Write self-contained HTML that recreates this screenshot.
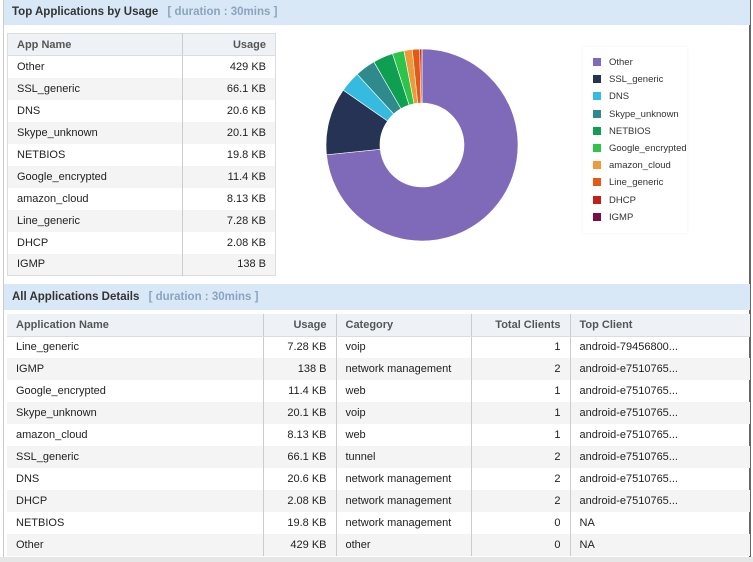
<!DOCTYPE html>
<html><head><meta charset="utf-8"><style>
*{margin:0;padding:0;box-sizing:border-box}
body{width:753px;height:562px;background:#fff;font-family:"Liberation Sans",Arial,sans-serif;font-size:11px;color:#222;position:relative;overflow:hidden}
.frame{position:absolute;left:3px;top:0;width:748px;height:558px;border-left:1px solid #ccc;border-right:2px solid #666;background:#fff}
.hdr{position:absolute;left:4px;width:746px;background:#d9e8f6;font-weight:bold;color:#333;font-size:11.5px;padding-left:8px}
.hdr span{color:#8aa4bf;font-weight:bold;margin-left:6px}
table{position:absolute;border-collapse:collapse}
td,th{height:22px;padding:0 9px;white-space:nowrap;font-weight:normal}
th{background:#eef2f6;color:#555;font-weight:bold;text-align:left;border-bottom:1px solid #d8dde3}
tr:nth-child(odd) td{background:#f4f4f4}
.r{text-align:right}
.bl{border-left:1px solid #ccc}
.leg{position:absolute;left:583px;top:47px;width:104px;height:186px;background:#fff;box-shadow:0 0 3px #eee}
.leg div{position:absolute;left:10px;font-size:9.5px;color:#333}
.leg i{display:inline-block;width:8px;height:8px;margin-right:8px;vertical-align:-1px}
</style></head><body>
<div class="frame"></div>
<div class="hdr" style="top:0;height:25px;line-height:24px">Top Applications by Usage <span>[ duration : 30mins ]</span></div>
<table style="left:7px;top:33px;width:269px;border:1px solid #ddd">
<tr><th style="height:22px">App Name</th><th class="r bl">Usage</th></tr>
<tr><td>Other</td><td class="r bl">429 KB</td></tr>
<tr><td>SSL_generic</td><td class="r bl">66.1 KB</td></tr>
<tr><td>DNS</td><td class="r bl">20.6 KB</td></tr>
<tr><td>Skype_unknown</td><td class="r bl">20.1 KB</td></tr>
<tr><td>NETBIOS</td><td class="r bl">19.8 KB</td></tr>
<tr><td>Google_encrypted</td><td class="r bl">11.4 KB</td></tr>
<tr><td>amazon_cloud</td><td class="r bl">8.13 KB</td></tr>
<tr><td>Line_generic</td><td class="r bl">7.28 KB</td></tr>
<tr><td>DHCP</td><td class="r bl">2.08 KB</td></tr>
<tr><td>IGMP</td><td class="r bl">138 B</td></tr>
</table>
<svg id="pie" style="position:absolute;left:0;top:0" width="753" height="290"></svg>
<div class="leg" id="leg"></div>
<div class="hdr" style="top:284px;height:26px;line-height:26px">All Applications Details <span>[ duration : 30mins ]</span></div>
<table style="left:7px;top:314px;width:743px">
<tr><th style="width:256px">Application Name</th><th class="r bl" style="width:73px">Usage</th><th class="bl" style="width:135px">Category</th><th class="r bl" style="width:99px">Total Clients</th><th class="bl">Top Client</th></tr>
<tr><td>Line_generic</td><td class="r bl">7.28 KB</td><td class="bl">voip</td><td class="r bl">1</td><td class="bl">android-79456800...</td></tr>
<tr><td>IGMP</td><td class="r bl">138 B</td><td class="bl">network management</td><td class="r bl">2</td><td class="bl">android-e7510765...</td></tr>
<tr><td>Google_encrypted</td><td class="r bl">11.4 KB</td><td class="bl">web</td><td class="r bl">1</td><td class="bl">android-e7510765...</td></tr>
<tr><td>Skype_unknown</td><td class="r bl">20.1 KB</td><td class="bl">voip</td><td class="r bl">1</td><td class="bl">android-e7510765...</td></tr>
<tr><td>amazon_cloud</td><td class="r bl">8.13 KB</td><td class="bl">web</td><td class="r bl">1</td><td class="bl">android-e7510765...</td></tr>
<tr><td>SSL_generic</td><td class="r bl">66.1 KB</td><td class="bl">tunnel</td><td class="r bl">2</td><td class="bl">android-e7510765...</td></tr>
<tr><td>DNS</td><td class="r bl">20.6 KB</td><td class="bl">network management</td><td class="r bl">2</td><td class="bl">android-e7510765...</td></tr>
<tr><td>DHCP</td><td class="r bl">2.08 KB</td><td class="bl">network management</td><td class="r bl">2</td><td class="bl">android-e7510765...</td></tr>
<tr><td>NETBIOS</td><td class="r bl">19.8 KB</td><td class="bl">network management</td><td class="r bl">0</td><td class="bl">NA</td></tr>
<tr><td>Other</td><td class="r bl">429 KB</td><td class="bl">other</td><td class="r bl">0</td><td class="bl">NA</td></tr>
</table>
<div style="position:absolute;left:0;top:557px;width:753px;height:5px;background:#e6e6e6"></div>
<script>
var d=[["Other",429,"#7f69b9"],["SSL_generic",66.1,"#263354"],["DNS",20.6,"#35bbe0"],["Skype_unknown",20.1,"#2e8a8c"],["NETBIOS",19.8,"#0f9f50"],["Google_encrypted",11.4,"#2ec44a"],["amazon_cloud",8.13,"#ee9a3a"],["Line_generic",7.28,"#e35a14"],["DHCP",2.08,"#c1201c"],["IGMP",0.138,"#7a0d43"]];
var t=0;d.forEach(function(x){t+=x[1]});
var cx=422,cy=145,R=96,r=42,a=0,s="",L="";
function p(rad,ang){return [cx+rad*Math.sin(ang),cy-rad*Math.cos(ang)]}
d.forEach(function(x,i){var b=a+x[1]/t*2*Math.PI,lg=(b-a)>Math.PI?1:0;
var p1=p(R,a),p2=p(R,b),p3=p(r,b),p4=p(r,a);
s+='<path d="M'+p1+' A'+R+' '+R+' 0 '+lg+' 1 '+p2+' L'+p3+' A'+r+' '+r+' 0 '+lg+' 0 '+p4+'Z" fill="'+x[2]+'" stroke="#fff" stroke-width="0.6"/>';a=b;
L+='<div style="top:'+(10+i*17.2)+'px"><i style="background:'+x[2]+'"></i>'+x[0]+'</div>';});
document.getElementById("pie").innerHTML=s;document.getElementById("leg").innerHTML=L;
</script>
</body></html>
